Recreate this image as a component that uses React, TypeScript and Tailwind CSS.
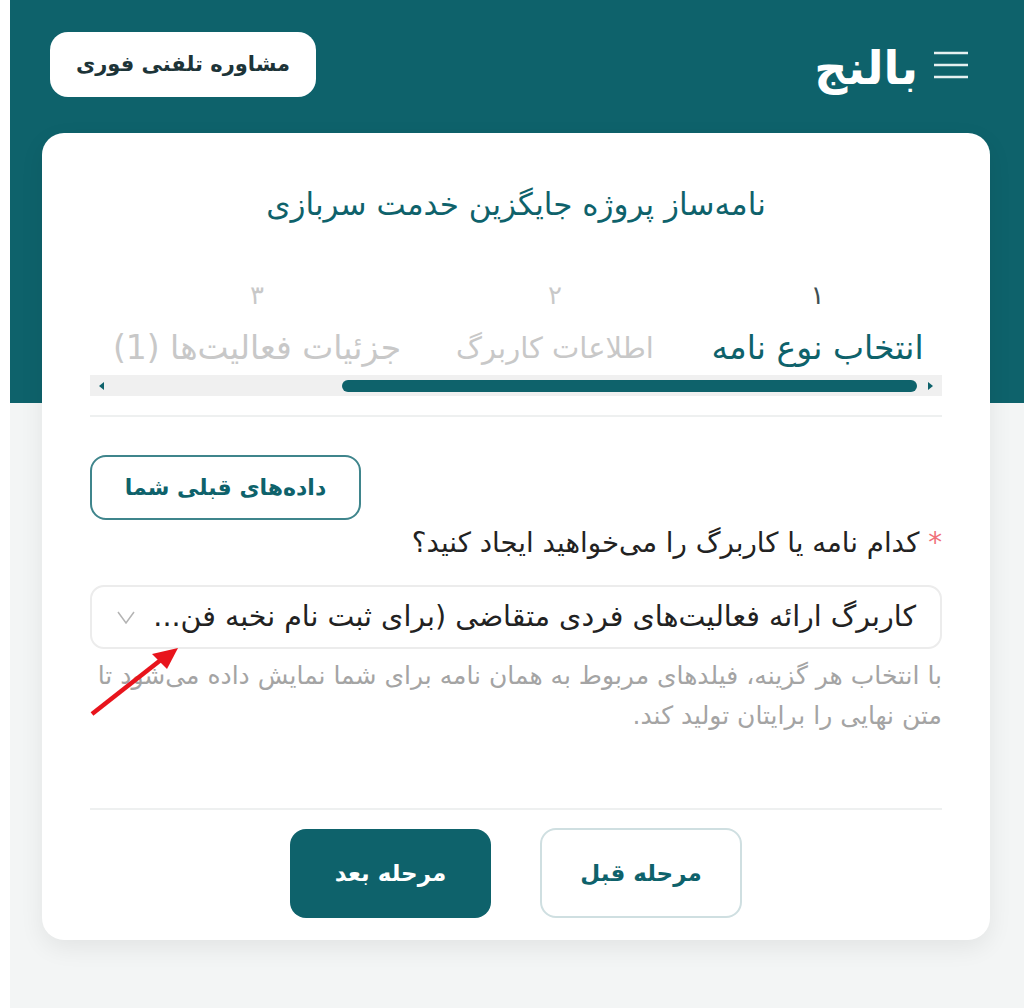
import React from "react";

const font = { fontFamily: '"DejaVu Sans", "Noto Sans", sans-serif' };

function Step({ n, label, active, w, size }: { n: string; label: string; active?: boolean; w: string; size: string }) {
  return (
    <div className={`flex flex-col items-center shrink-0 ${w} ${active ? "text-[#0e626b]" : "text-[#c8c8c8]"}`}>
      <div className={`text-[26px] leading-[30px] ${active ? "text-[#3f4f52]" : ""}`}>{n}</div>
      <div className={`mt-[15px] ${size} leading-[46px] whitespace-nowrap`}>{label}</div>
    </div>
  );
}

export default function App() {
  return (
    <div dir="rtl" className="w-[1024px] h-[1008px] bg-white flex overflow-hidden" style={font}>
      <div className="w-[1014px] relative h-full bg-[linear-gradient(#0e626b_403px,#f3f5f5_403px)] flex flex-col">
        <header className="h-[133px] shrink-0 flex items-start justify-between pr-[56px] pl-[40px] pt-[32px]">
          <div className="flex items-center gap-[16px] mt-[6px]">
            <svg className="mb-[7px]" width="34" height="28" viewBox="0 0 34 28" fill="none" stroke="#e6f0f0" strokeWidth="2.5">
              <path d="M0 2h34M0 14h34M0 26h34" />
            </svg>
            <span className="text-[46px] leading-[60px] font-bold text-white">بالنج</span>
          </div>
          <button className="w-[266px] h-[65px] bg-white rounded-[18px] text-[21px] font-bold text-[#1d3438]">
            مشاوره تلفنی فوری
          </button>
        </header>

        <main className="relative mr-[34px] w-[948px] h-[807px] bg-white rounded-[22px] shadow-[0_8px_24px_rgba(0,0,0,0.07)] px-[48px] pt-[49px] flex flex-col">
          <h1 className="text-center text-[31px] leading-[44px] font-normal text-[#0e626b] whitespace-nowrap">
            نامه‌ساز پروژه جایگزین خدمت سربازی
          </h1>

          <div className="mt-[54px] flex gap-[57px] pr-[17px] overflow-hidden">
            <Step n="۱" label="انتخاب نوع نامه" active w="w-[215px]" size="text-[33px]" />
            <Step n="۲" label="اطلاعات کاربرگ" w="w-[196px]" size="text-[29px]" />
            <Step n="۳" label="جزئیات فعالیت‌ها (1)" w="w-[286px]" size="text-[33px]" />
          </div>

          <div className="mt-[4px] h-[21px] bg-[#f0f0f0] flex items-center justify-between px-[9px]">
            <span className="w-0 h-0 border-y-[4px] border-y-transparent border-l-[5px] border-l-[#0e626b]" />
            <div className="h-[12px] w-[575px] mr-[11px] rounded-full bg-[#0e626b]" />
            <span className="mr-auto w-0 h-0 border-y-[4px] border-y-transparent border-r-[5px] border-r-[#0e626b]" />
          </div>

          <div className="mt-[19px] border-t-2 border-[#eef0f0]" />

          <div className="mt-[38px] flex justify-end">
            <button className="w-[271px] h-[65px] rounded-[16px] border-2 border-[#3f858c] text-[22px] font-bold text-[#0e626b]">
              داده‌های قبلی شما
            </button>
          </div>

          <label className="mt-0 text-[27.7px] leading-[46px] text-[#222] whitespace-nowrap">
            <span className="text-[#f0707a]">* </span>
            کدام نامه یا کاربرگ را می‌خواهید ایجاد کنید؟
          </label>

          <div className="mt-[19px] h-[64px] rounded-[14px] border-2 border-[#ececec] flex items-center justify-between pr-[24px] pl-[25px]">
            <span className="text-[28.5px] text-[#222] whitespace-nowrap">کاربرگ ارائه فعالیت‌های فردی متقاضی (برای ثبت نام نخبه فن...</span>
            <svg width="18" height="14" viewBox="0 0 18 14" fill="none" stroke="#b4b4b4" strokeWidth="1.5">
              <path d="M1 2l8 11 8-11" />
            </svg>
          </div>

          <p className="mt-[7px] text-[25px] leading-[40px] text-[#a4a4a4] whitespace-nowrap">
            با انتخاب هر گزینه، فیلدهای مربوط به همان نامه برای شما نمایش داده می‌شود تا
            <br />
            متن نهایی را برایتان تولید کند.
          </p>

          <div className="mt-[72px] border-t-2 border-[#eef0f0]" />

          <div className="mt-[18px] flex justify-center gap-[49px]">
            <button className="w-[202px] h-[90px] rounded-[16px] border-2 border-[#cfdfe1] bg-white text-[23px] font-bold text-[#0e626b]">
              مرحله قبل
            </button>
            <button className="w-[201px] h-[89px] mt-[1px] rounded-[16px] bg-[#0e626b] text-[23px] font-bold text-white">
              مرحله بعد
            </button>
          </div>

          <svg className="absolute left-[48px] top-[514px] pointer-events-none" width="92" height="72" viewBox="0 0 92 72" fill="none">
            <path d="M2 67L72 12" stroke="#e8141c" strokeWidth="4.5" />
            <path d="M88 1L77 22L62 7Z" fill="#e8141c" />
          </svg>
        </main>
      </div>
    </div>
  );
}
